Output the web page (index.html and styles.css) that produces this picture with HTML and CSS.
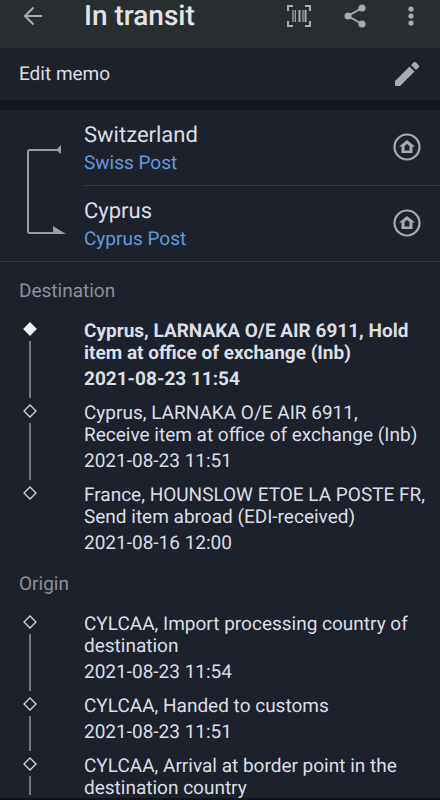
FILE: index.html
```html
<!DOCTYPE html>
<html lang="en">
<head>
<meta charset="utf-8">
<meta name="viewport" content="width=device-width, initial-scale=1">
<title>In transit</title>
<link rel="stylesheet" href="styles.css">
</head>
<body>
<header class="bar">
  <button class="icon-button back" aria-label="Back"><svg width="20" height="20" viewBox="0 0 20 20" fill="none" stroke="currentColor" stroke-width="2"><path d="M19 10H2M10.500 1.500 2 10l8.500 8.500"/></svg></button>
  <h1 class="title">In transit</h1>
  <button class="icon-button" aria-label="Barcode"><svg width="24" height="22" viewBox="0 0 24 22" fill="none" stroke="currentColor"><path stroke-width="2" d="M1 6V1h5M18 1h5v5M23 16v5h-5M6 21H1v-5"/><path stroke-width="1.200" d="M6 5v12M8.300 5v12M16 5v12"/><path stroke-width="2" d="M12.500 5v12M18.500 5v12"/></svg></button>
  <button class="icon-button" aria-label="Share"><svg width="22" height="24" viewBox="0 0 22 24"><path d="M18 4 4 12l14 8" fill="none" stroke="currentColor" stroke-width="2"/><g fill="currentColor"><circle cx="18" cy="4" r="3.500"/><circle cx="4" cy="12" r="3.500"/><circle cx="18" cy="20" r="3.500"/></g></svg></button>
  <button class="icon-button" aria-label="More options"><svg width="6" height="20" viewBox="0 0 6 20" fill="currentColor"><circle cx="3" cy="3" r="2.600"/><circle cx="3" cy="10" r="2.600"/><circle cx="3" cy="17" r="2.600"/></svg></button>
</header>
<main class="content">
  <section class="memo">
    <span>Edit memo</span>
    <button class="icon-button" aria-label="Edit memo"><svg width="26" height="26" viewBox="0 0 26 26" fill="currentColor"><path d="M1 20 15.500 5.500l5 5L6 25H1zM17 4l2.800-2.800q1-1 2 0l3 3q1 1 0 2L22 9z"/></svg></button>
  </section>
  <section class="route">
    <svg class="path" width="40" height="92" viewBox="0 0 40 92" fill="none" aria-hidden="true"><path d="M31 6H4Q2 6 2 8v79q0 2 2 2h24" stroke="currentColor" stroke-width="2"/><path d="M35 1v9l-5-4zM27 82l13 8H27z" fill="currentColor"/></svg>
    <div class="stops">
      <div class="stop">
        <div><h2 class="country">Switzerland</h2><a class="carrier" href="#">Swiss Post</a></div>
        <button class="icon-button home" aria-label="Swiss Post website"><svg width="28" height="28" viewBox="0 0 28 28"><circle cx="14" cy="14" r="12.500" fill="none" stroke="currentColor" stroke-width="2.200"/><path fill="currentColor" fill-rule="evenodd" d="m14 7 8 6.500h-2.500V20h-11v-6.500H6zM11.500 13v4.500h5V13L14 11z"/></svg></button>
      </div>
      <div class="stop">
        <div><h2 class="country">Cyprus</h2><a class="carrier" href="#">Cyprus Post</a></div>
        <button class="icon-button home" aria-label="Cyprus Post website"><svg width="28" height="28" viewBox="0 0 28 28"><circle cx="14" cy="14" r="12.500" fill="none" stroke="currentColor" stroke-width="2.200"/><path fill="currentColor" fill-rule="evenodd" d="m14 7 8 6.500h-2.500V20h-11v-6.500H6zM11.500 13v4.500h5V13L14 11z"/></svg></button>
      </div>
    </div>
  </section>
  <section class="events">
    <h2 class="label">Destination</h2>
    <ol class="timeline">
      <li class="event latest"><div class="track"><svg width="14" height="14" viewBox="0 0 14 14"><path d="m7 1 6 6-6 6-6-6z"/></svg></div><div><p>Cyprus, LARNAKA O/E AIR 6911, Hold item at office of exchange (Inb)</p><time>2021-08-23 11:54</time></div></li>
      <li class="event"><div class="track"><svg width="14" height="14" viewBox="0 0 14 14"><path d="m7 1 6 6-6 6-6-6z"/></svg></div><div><p>Cyprus, LARNAKA O/E AIR 6911, Receive item at office of exchange (Inb)</p><time>2021-08-23 11:51</time></div></li>
      <li class="event"><div class="track end"><svg width="14" height="14" viewBox="0 0 14 14"><path d="m7 1 6 6-6 6-6-6z"/></svg></div><div><p>France, HOUNSLOW ETOE LA POSTE FR, Send item abroad (EDI-received)</p><time>2021-08-16 12:00</time></div></li>
    </ol>
  </section>
  <section class="events next">
    <h2 class="label">Origin</h2>
    <ol class="timeline">
      <li class="event"><div class="track"><svg width="14" height="14" viewBox="0 0 14 14"><path d="m7 1 6 6-6 6-6-6z"/></svg></div><div><p>CYLCAA, Import processing country of destination</p><time>2021-08-23 11:54</time></div></li>
      <li class="event"><div class="track"><svg width="14" height="14" viewBox="0 0 14 14"><path d="m7 1 6 6-6 6-6-6z"/></svg></div><div><p>CYLCAA, Handed to customs</p><time>2021-08-23 11:51</time></div></li>
      <li class="event"><div class="track"><svg width="14" height="14" viewBox="0 0 14 14"><path d="m7 1 6 6-6 6-6-6z"/></svg></div><div><p>CYLCAA, Arrival at border point in the destination country</p></div></li>
    </ol>
  </section>
</main>
</body>
</html>
```
FILE: styles.css
```css
* { box-sizing: border-box; }

body {
  display: flex;
  flex-direction: column;
  height: 100vh;
  margin: 0;
  border-bottom: 2px solid #10131a;
  background: #1c212c;
  color: #dcdee5;
  font: 19px/22px Roboto, sans-serif;
  text-rendering: geometricPrecision;
}

h1, h2, p, ol { margin: 0; padding: 0; font-weight: 400; }

.icon-button {
  display: grid;
  place-items: center;
  flex: none;
  width: 56px;
  height: 32px;
  padding: 0;
  border: 0;
  background: none;
  color: #a9abb3;
}

.bar {
  display: flex;
  flex: none;
  align-items: center;
  padding: 0 1px 16px 0;
  background: #282e30;
}

.back { width: 66px; }

.title {
  flex: 1;
  padding-left: 18px;
  color: #e2e4e7;
  font-size: 28px;
  font-weight: 500;
  line-height: 32px;
}

.content {
  flex: 1;
  min-height: 0;
  overflow-y: auto;
  scrollbar-width: none;
}

.memo {
  display: flex;
  align-items: center;
  justify-content: space-between;
  height: 62px;
  padding: 0 5px 0 19px;
  border-bottom: 10px solid #12181c;
}

.route {
  display: grid;
  grid-template-columns: 84px 1fr;
  align-items: center;
  border-bottom: 1px solid #343943;
}

.path {
  justify-self: center;
  margin-left: 8px;
  margin-top: 8px;
  color: #9b9da3;
}

.stop {
  display: flex;
  align-items: center;
  justify-content: space-between;
  padding: 12px 5px 10px 0;
}

.stop + .stop { border-top: 1px solid #343943; }

.home { margin-bottom: 4px; }

.country {
  font-size: 22px;
  line-height: 28px;
}

.carrier {
  display: block;
  color: #629bdb;
  line-height: 25px;
  text-decoration: none;
}

.events { padding-top: 18px; }

.next { padding-top: 7px; }

.label {
  padding: 0 19px 18px;
  color: #8d9098;
  font-size: 19px;
}

.timeline { list-style: none; }

.event {
  display: grid;
  grid-template-columns: 60px 1fr;
  column-gap: 24px;
  padding-right: 14px;
}

.event time {
  display: block;
  padding: 4px 0 12px;
}

.track {
  display: flex;
  flex-direction: column;
  align-items: center;
  gap: 5px;
  padding: 2px 0 4px;
}

.track svg {
  flex: none;
  fill: none;
  stroke: #d5d7de;
  stroke-width: 1.3px;
}

.track::after {
  content: "";
  flex: 1;
  width: 2px;
  background: #73767e;
}

.end::after { display: none; }

.latest, .latest p { font-weight: 700; }

.latest svg { fill: #eceef2; stroke: #eceef2; }
```
